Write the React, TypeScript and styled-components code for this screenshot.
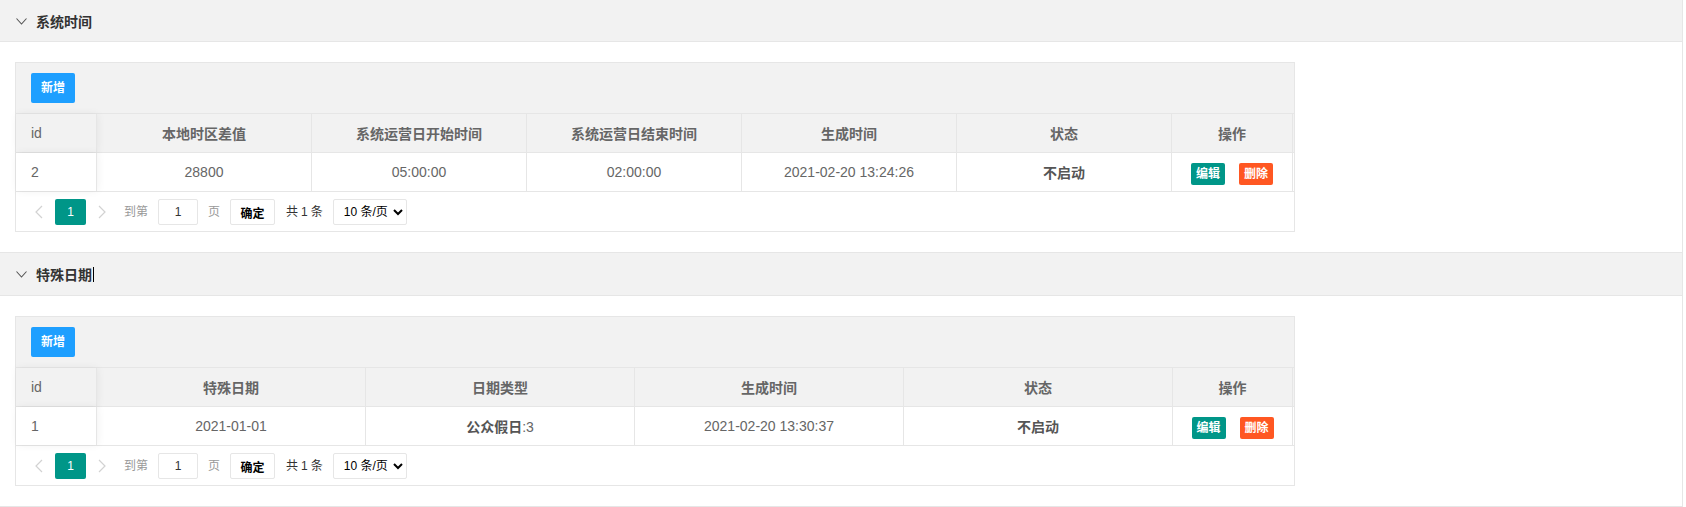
import React from "react";
import styled, { createGlobalStyle } from "styled-components";

const GlobalStyle = createGlobalStyle`
  html, body { margin: 0; padding: 0; background: #fff; }
  body {
    font-family: "Liberation Sans", Arial, "Noto Sans CJK SC", sans-serif;
    font-size: 14px;
    color: #666;
  }
  * { box-sizing: border-box; }
`;

const Collapse = styled.div`
  width: 1683px;
  border-right: 1px solid #e6e6e6;
  border-bottom: 1px solid #e6e6e6;
`;

const Item = styled.section<{ $first?: boolean }>`
  border-top: ${(p) => (p.$first ? "none" : "1px solid #e6e6e6")};
`;

const Title = styled.div<{ $h: number }>`
  height: ${(p) => p.$h}px;
  display: flex;
  align-items: center;
  padding-left: 16px;
  background: #f2f2f2;
  color: #333;
  font-weight: 700;
  font-size: 14px;
`;

const Chevron = styled.svg`
  width: 11px;
  height: 7px;
  margin-right: 9px;
  margin-top: 1px;
`;

const Caret = styled.span`
  display: inline-block;
  width: 1px;
  height: 15px;
  background: #000;
  margin-left: 1px;
`;

const Content = styled.div`
  border-top: 1px solid #e6e6e6;
  padding: 10px 15px;
`;

const TableView = styled.div`
  width: 1280px;
  margin: 10px 0;
  border: 1px solid #e6e6e6;
  background: #fff;
`;

const Toolbar = styled.div`
  height: 51px;
  padding: 10px 15px;
  background: #f2f2f2;
  border-bottom: 1px solid #e6e6e6;
`;

const Btn = styled.button<{ $bg: string; $xs?: boolean }>`
  border: none;
  border-radius: 2px;
  background: ${(p) => p.$bg};
  color: #fff;
  font-family: inherit;
  font-size: 12px;
  font-weight: 700;
  padding: 0;
  width: ${(p) => (p.$xs ? 34 : 44)}px;
  height: ${(p) => (p.$xs ? 22 : 30)}px;
  line-height: ${(p) => (p.$xs ? 22 : 30)}px;
  cursor: pointer;
`;

const Row = styled.div<{ $cols: string; $head?: boolean }>`
  display: grid;
  grid-template-columns: ${(p) => p.$cols} 1px;
  height: 39px;
  border-bottom: 1px solid #e6e6e6;
  background: ${(p) => (p.$head ? "#f2f2f2" : "#fff")};
  font-weight: ${(p) => (p.$head ? 700 : 400)};
`;

const Cell = styled.div<{ $left?: boolean; $fixed?: boolean }>`
  display: flex;
  align-items: center;
  justify-content: ${(p) => (p.$left ? "flex-start" : "center")};
  padding: 0 15px;
  border-right: 1px solid #e6e6e6;
  white-space: nowrap;
  overflow: hidden;
  position: ${(p) => (p.$fixed ? "relative" : "static")};
  z-index: ${(p) => (p.$fixed ? 1 : "auto")};
  box-shadow: ${(p) => (p.$fixed ? "1px 0 8px rgba(0,0,0,0.06)" : "none")};
  font-weight: ${(p) => (p.$fixed ? 400 : "inherit")};
  background: inherit;
`;

const Strong = styled.b`
  color: #555;
  font-weight: 700;
`;

const Actions = styled.div`
  display: flex;
  gap: 14px;
  margin-top: 3px;
`;

const Pager = styled.div`
  height: 39px;
  padding: 7px 7px 0;
  display: flex;
  align-items: flex-start;
  font-size: 12px;
  color: #333;
`;

const Arrow = styled.span`
  width: 32px;
  height: 26px;
  display: flex;
  align-items: center;
  justify-content: center;
`;

const Curr = styled.span`
  width: 31px;
  height: 26px;
  line-height: 26px;
  text-align: center;
  background: #009688;
  color: #fff;
  border-radius: 2px;
`;

const Label = styled.span<{ $ml: number; $grey?: boolean }>`
  margin-left: ${(p) => p.$ml}px;
  line-height: 26px;
  color: ${(p) => (p.$grey ? "#999" : "#333")};
  white-space: pre;
  display: flex;
  gap: 3px;
`;

const SkipInput = styled.input`
  margin-left: 10px;
  width: 40px;
  height: 26px;
  border: 1px solid #e6e6e6;
  border-radius: 2px;
  text-align: center;
  font-family: inherit;
  font-size: 12px;
  color: #333;
  padding: 0;
  outline: none;
`;

const SkipBtn = styled.button`
  margin-left: 10px;
  width: 45px;
  height: 26px;
  border: 1px solid #e6e6e6;
  border-radius: 2px;
  background: #fff;
  font-family: inherit;
  font-size: 12px;
  font-weight: 700;
  color: #000;
  padding: 0;
`;

const Limit = styled.select`
  margin-left: 10px;
  width: 74px;
  height: 26px;
  border: 1px solid #e6e6e6;
  border-radius: 2px;
  background: #fff;
  font-family: inherit;
  font-size: 12px;
  color: #000;
  padding: 0 0 0 6px;
`;

const ChevronIcon = ({ dir }: { dir: "l" | "r" }) => (
  <svg width="8" height="14" viewBox="0 0 8 14">
    <polyline
      points={dir === "l" ? "7,1 1,7 7,13" : "1,1 7,7 1,13"}
      fill="none"
      stroke="#d2d2d2"
      strokeWidth="1.2"
    />
  </svg>
);

const Pagination = () => (
  <Pager>
    <Arrow><ChevronIcon dir="l" /></Arrow>
    <Curr>1</Curr>
    <Arrow><ChevronIcon dir="r" /></Arrow>
    <Label $ml={6} $grey>到第</Label>
    <SkipInput defaultValue="1" />
    <Label $ml={10} $grey>页</Label>
    <SkipBtn>确定</SkipBtn>
    <Label $ml={11}>
      <span>共</span>
      <span>1</span>
      <span>条</span>
    </Label>
    <Limit defaultValue="10">
      <option value="10">10 条/页</option>
      <option value="20">20 条/页</option>
    </Limit>
  </Pager>
);

type Props = {
  cols: string;
  headers: string[];
  cells: React.ReactNode[];
};

const DataTable = ({ cols, headers, cells }: Props) => (
  <TableView>
    <Toolbar>
      <Btn $bg="#1E9FFF">新增</Btn>
    </Toolbar>
    <Row $cols={cols} $head>
      {headers.map((h, i) => (
        <Cell key={h} $left={i === 0} $fixed={i === 0}>{h}</Cell>
      ))}
      <span />
    </Row>
    <Row $cols={cols}>
      {cells.map((c, i) => (
        <Cell key={i} $left={i === 0} $fixed={i === 0}>{c}</Cell>
      ))}
      <span />
    </Row>
    <Pagination />
  </TableView>
);

const ActionButtons = () => (
  <Actions>
    <Btn $bg="#009688" $xs>编辑</Btn>
    <Btn $bg="#FF5722" $xs>删除</Btn>
  </Actions>
);

const ChevronDown = () => (
  <Chevron viewBox="0 0 11 7">
    <polyline points="0.5,0.5 5.5,6 10.5,0.5" fill="none" stroke="#555" strokeWidth="1.1" />
  </Chevron>
);

export default function App() {
  return (
    <>
      <GlobalStyle />
      <Collapse>
        <Item $first>
          <Title $h={41}>
            <ChevronDown />
            系统时间
          </Title>
          <Content>
            <DataTable
              cols="81px 215px 215px 215px 215px 215px 121px"
              headers={["id", "本地时区差值", "系统运营日开始时间", "系统运营日结束时间", "生成时间", "状态", "操作"]}
              cells={[
                "2",
                "28800",
                "05:00:00",
                "02:00:00",
                "2021-02-20 13:24:26",
                <Strong>不启动</Strong>,
                <ActionButtons />,
              ]}
            />
          </Content>
        </Item>
        <Item>
          <Title $h={42}>
            <ChevronDown />
            特殊日期
            <Caret />
          </Title>
          <Content>
            <DataTable
              cols="81px 269px 269px 269px 269px 120px"
              headers={["id", "特殊日期", "日期类型", "生成时间", "状态", "操作"]}
              cells={[
                "1",
                "2021-01-01",
                <span><Strong>公众假日</Strong>:3</span>,
                "2021-02-20 13:30:37",
                <Strong>不启动</Strong>,
                <ActionButtons />,
              ]}
            />
          </Content>
        </Item>
      </Collapse>
    </>
  );
}
